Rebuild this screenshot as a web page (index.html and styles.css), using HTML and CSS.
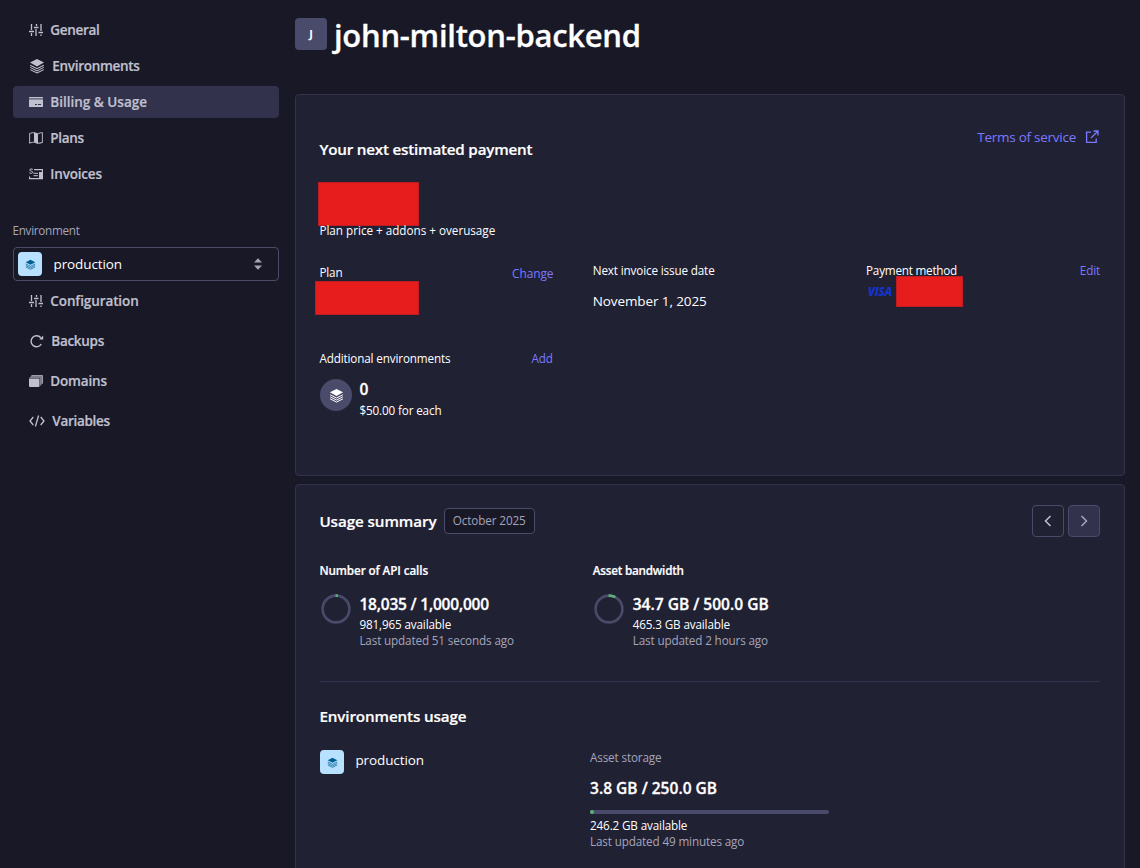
FILE: index.html
```
<!DOCTYPE html>
<html lang="en">
<head>
<meta charset="utf-8">
<title>john-milton-backend – Billing &amp; Usage</title>
<link rel="stylesheet" href="styles.css">
</head>
<body>
<svg class="sprite" aria-hidden="true">
  <symbol id="i-sliders" viewBox="0 0 14 14"><path d="M2.5 1v6M2.5 10v3M0 8.5h5M7.5 1v2M5 4.5h4.500M7 6v7M12 1v7M12 11.500v1.500M9.500 9.500h4.500" fill="none" stroke="currentColor" stroke-width="1.300"/></symbol>
  <symbol id="i-layers" viewBox="0 0 16 16"><path d="M8 1l7 3.600-7 3.800-7-3.800z" fill="currentColor"/><path d="M1.200 7.200L8 10.700l6.800-3.500M1.200 9.400L8 12.900l6.800-3.500M1.200 11.600L8 15l6.800-3.400" fill="none" stroke="currentColor" stroke-width="1.050"/></symbol>
  <symbol id="i-card" viewBox="0 0 14 12"><path fill="currentColor" fill-rule="evenodd" d="M.5 1h13a.5.5 0 01.5.5V2H0v-.5A.5.5 0 01.500 1zM0 3.500h14v7a.5.500 0 01-.5.500H.5a.500.500 0 01-.5-.500zM6 8v1h2V8zM9 8v1h3V8z"/><path d="M0 2h14v1.500H0z" fill="currentColor" opacity=".45"/></symbol>
  <symbol id="i-plans" viewBox="0 0 14 12"><path d="M5 0l4 1.500V12l-4-1.500z" fill="currentColor"/><path d="M5 .7H3L.6 1.600v9.500l2.600-.8H5M9 1.700l2.500-.9h1.900v9.500l-2.400.8H9" fill="none" stroke="currentColor" stroke-width="1.100" opacity=".85"/></symbol>
  <symbol id="i-invoice" viewBox="0 0 14 12"><path d="M5 1.600h8.500v9H.6V8.500" fill="none" stroke="currentColor" stroke-width="1.200"/><path d="M3.800 1.400C3 .7.600.800.600 2s3.200.9 3.200 2.300C3.800 5.600 1 5.600.300 4.700M4.500 5.300H9M4.500 7.700H9" fill="none" stroke="currentColor"/><path d="M10 4h4v7h-4z" fill="currentColor"/></symbol>
  <symbol id="i-refresh" viewBox="0 0 14 14"><path d="M11.300 3.700A5.500 5.500 0 1011.800 10" fill="none" stroke="currentColor" stroke-width="1.400"/><path d="M13.700 1.500v4H9.700z" fill="currentColor"/></symbol>
  <symbol id="i-domains" viewBox="0 0 14 12"><path d="M0 3.500h10.500V11a1 1 0 01-1 1H1a1 1 0 01-1-1z" fill="currentColor"/><path d="M.2 3L2.500.500h11v8L11 11V3z" fill="currentColor" opacity=".6"/><path d="M2.500.500h11v8" fill="none" stroke="currentColor" stroke-width=".7"/></symbol>
  <symbol id="i-code" viewBox="0 0 16 12"><path d="M4.300 2L1 6l3.300 4M11.700 2L15 6l-3.300 4M9.600.500L6.400 11.500" fill="none" stroke="currentColor" stroke-width="1.300"/></symbol>
</svg>

<div class="page">
  <aside class="sidebar">
    <nav class="nav">
      <a class="nav-item"><svg class="icon"><use href="#i-sliders"/></svg><span class="tight-4">General</span></a>
      <a class="nav-item"><svg class="icon icon-wide"><use href="#i-layers"/></svg><span class="tight-3">Environments</span></a>
      <a class="nav-item active"><svg class="icon icon-low"><use href="#i-card"/></svg><span>Billing &amp; Usage</span></a>
      <a class="nav-item"><svg class="icon icon-low"><use href="#i-plans"/></svg><span class="tight-3">Plans</span></a>
      <a class="nav-item"><svg class="icon icon-low"><use href="#i-invoice"/></svg><span class="tight-2">Invoices</span></a>
    </nav>
    <div class="env-label">Environment</div>
    <div class="env-select">
      <span class="env-badge"><svg><use href="#i-layers"/></svg></span>
      <span class="env-name">production</span>
      <svg class="carets" viewBox="0 0 8 12"><path d="M0 4.500L4 .300l4 4.200zM0 7.500l4 4.200 4-4.200z" fill="currentColor"/></svg>
    </div>
    <nav class="nav nav-env">
      <a class="nav-item"><svg class="icon"><use href="#i-sliders"/></svg><span class="tight-1">Configuration</span></a>
      <a class="nav-item"><svg class="icon icon-mid"><use href="#i-refresh"/></svg><span class="tight-3">Backups</span></a>
      <a class="nav-item"><svg class="icon icon-low"><use href="#i-domains"/></svg><span class="tight-2">Domains</span></a>
      <a class="nav-item"><svg class="icon icon-wide icon-low"><use href="#i-code"/></svg><span class="tight-3">Variables</span></a>
    </nav>
  </aside>

  <main class="main">
    <header class="project">
      <span class="avatar">J</span>
      <h1 class="project-name">john-milton-backend</h1>
    </header>

    <section class="card payment">
      <div class="payment-head">
        <h2 class="heading payment-title">Your next estimated payment</h2>
        <a class="link terms">Terms of service
          <svg class="external" viewBox="0 0 14 14"><path d="M6 2.200H1.600v10.200h9.600V8.500M8.500 1h4.500v4.500M13 1L6 8" fill="none" stroke="currentColor" stroke-width="1.300"/></svg>
        </a>
      </div>
      <div class="redacted redacted-price"></div>
      <p class="small price-note">Plan price + addons + overusage</p>

      <div class="columns">
        <div class="plan">
          <div class="label-row"><span class="small">Plan</span><a class="link change">Change</a></div>
          <div class="redacted redacted-plan"></div>
        </div>
        <div>
          <div class="small">Next invoice issue date</div>
          <div class="invoice-date">November 1, 2025</div>
        </div>
        <div>
          <div class="label-row"><span class="small payment-label">Payment method</span><a class="link small">Edit</a></div>
          <div class="payment-card"><span class="visa">VISA</span><span class="redacted redacted-card"></span></div>
        </div>
        <div class="extra">
          <div class="label-row"><span class="small">Additional environments</span><a class="link small add">Add</a></div>
          <div class="stat">
            <span class="round"><svg><use href="#i-layers"/></svg></span>
            <div><div class="figure zero">0</div><div class="small each">$50.00 for each</div></div>
          </div>
        </div>
      </div>
    </section>

    <section class="card usage">
      <div class="usage-head">
        <h2 class="heading">Usage summary</h2>
        <span class="month">October 2025</span>
        <button class="pager pager-first" aria-label="Previous"><svg viewBox="0 0 8 12"><path d="M6.500 1L1.500 6l5 5"/></svg></button>
        <button class="pager pager-next" aria-label="Next"><svg viewBox="0 0 8 12"><path d="M1.500 1l5 5-5 5"/></svg></button>
      </div>
      <div class="columns">
        <div>
          <h3 class="small metric-title">Number of API calls</h3>
          <div class="stat metric">
            <svg class="ring" viewBox="0 0 32 32"><circle cx="16" cy="16" r="13.400"/><circle class="ring-value" cx="16" cy="16" r="13.400" pathLength="100" stroke-dasharray="3 97" stroke-dashoffset=".6"/></svg>
            <div><div class="figure api-figure">18,035 / 1,000,000</div><div class="small">981,965 available</div><div class="small muted">Last updated 51 seconds ago</div></div>
          </div>
        </div>
        <div>
          <h3 class="small metric-title metric-asset">Asset bandwidth</h3>
          <div class="stat metric">
            <svg class="ring" viewBox="0 0 32 32"><circle cx="16" cy="16" r="13.400"/><circle class="ring-value" cx="16" cy="16" r="13.400" pathLength="100" stroke-dasharray="8.500 91.500" stroke-dashoffset=".6"/></svg>
            <div><div class="figure">34.7 GB / 500.0 GB</div><div class="small">465.3 GB available</div><div class="small muted">Last updated 2 hours ago</div></div>
          </div>
        </div>
      </div>
      <hr class="divider">
      <h2 class="heading">Environments usage</h2>
      <div class="env-usage">
        <div class="env-row"><span class="env-badge"><svg><use href="#i-layers"/></svg></span><span class="env-name">production</span></div>
        <div class="storage">
          <div class="small muted storage-label">Asset storage</div>
          <div class="figure storage-figure">3.8 GB / 250.0 GB</div>
          <div class="bar"><div class="bar-value" style="width:1.500%"></div></div>
          <div class="small">246.2 GB available</div>
          <div class="small muted">Last updated 49 minutes ago</div>
        </div>
      </div>
    </section>
  </main>
</div>
</body>
</html>
```

FILE: styles.css
```
* { box-sizing: border-box; }

body {
  margin: 0;
  height: 868px;
  overflow: hidden;
  background: #181826;
  color: #fff;
  font: 400 13.5px/20px "Open Sans", sans-serif;
}

h1, h2, h3, p { margin: 0; }
svg { display: block; flex: none; }
.sprite { position: absolute; width: 0; height: 0; }

.page { display: flex; gap: 16px; padding-left: 13px; height: 868px; }

/* Sidebar */
.sidebar { width: 266px; padding-top: 14px; color: #c0c0cf; flex: none; }
.nav { display: flex; flex-direction: column; gap: 4px; }
.nav-env { gap: 8px; margin-top: 4px; }
.nav-item {
  display: flex;
  align-items: center;
  gap: 7.3px;
  height: 32px;
  padding-left: 16px;
  border-radius: 4px;
  font-weight: 600;
  -webkit-text-stroke: 0.2px currentColor;
}
.nav-item.active { background: #32324d; }
.icon { width: 14px; height: 14px; }
.icon-mid { width: 15px; }
.icon-wide { width: 16px; height: 16px; }
.icon-low { height: 12px; }
.tight-1 { letter-spacing: -0.1px; }
.tight-2 { letter-spacing: -0.18px; }
.tight-3 { letter-spacing: -0.3px; }
.tight-4 { letter-spacing: -0.33px; }

.env-label {
  margin-top: 32px;
  color: #a5a5ba;
  font-size: 11.7px;
  line-height: 16px;
  letter-spacing: -0.28px;
  text-indent: -0.5px;
}
.env-select {
  display: flex;
  align-items: center;
  gap: 11.5px;
  height: 34px;
  margin-top: 9px;
  padding: 0 16px 0 4px;
  border: 1px solid #4a4a6a;
  border-radius: 4px;
  color: #fff;
}
.env-badge {
  display: grid;
  place-items: center;
  width: 24px;
  height: 24px;
  flex: none;
  border-radius: 4px;
  background: #b8e1ff;
  color: #006096;
}
.env-badge svg { width: 11px; height: 11px; }
.env-name { letter-spacing: -0.1px; }
.carets { width: 8px; height: 12px; margin-left: auto; color: #a5a5ba; }

/* Main column */
.main { width: 830px; padding-top: 18px; flex: none; }
.project { display: flex; gap: 7px; height: 68px; }
.avatar {
  display: grid;
  place-items: center;
  width: 32px;
  height: 32px;
  border-radius: 4px;
  background: #4a4a6a;
  font-size: 11px;
  line-height: 16px;
  font-weight: 700;
}
.project-name {
  font-size: 31px;
  line-height: 34px;
  font-weight: 600;
  letter-spacing: -0.27px;
  -webkit-text-stroke: 0.3px currentColor;
}

.card {
  margin-top: 8px;
  padding: 0 24px;
  border: 1px solid #32324d;
  border-radius: 4px;
  background: #212134;
  text-indent: -0.6px;
}
.heading {
  font-size: 15.2px;
  line-height: 24px;
  font-weight: 600;
  letter-spacing: -0.12px;
  -webkit-text-stroke: 0.2px currentColor;
}
.small { font-size: 11.7px; line-height: 16px; letter-spacing: -0.14px; }
.muted { color: #a5a5ba; }
.link { color: #7b79ff; }
.redacted { border: 1px solid #bd1c20; background: #e71d1d; }
.columns { display: grid; grid-template-columns: repeat(3, 1fr); column-gap: 40px; }
.label-row { display: flex; justify-content: space-between; }

.payment { height: 382px; padding-top: 32px; }
.payment-head { display: flex; justify-content: space-between; }
.payment-title { margin-top: 10px; letter-spacing: -0.2px; }
.terms { display: flex; align-items: center; gap: 9px; height: 20px; letter-spacing: -0.26px; }
.external { width: 14px; height: 14px; margin-right: 1px; }
.redacted-price { width: 101px; height: 44px; margin: 21px 0 0 -2px; }
.price-note { margin-top: -4px; letter-spacing: -0.01px; }
.payment .columns { grid-template-rows: 88px auto; margin-top: 24px; }
.plan { padding-top: 2px; }
.change { font-size: 11.9px; line-height: 18px; letter-spacing: -0.1px; }
.redacted-plan { width: 104px; height: 34px; margin: -1px 0 0 -5px; }
.invoice-date { margin-top: 13px; letter-spacing: -0.1px; }
.payment-label { letter-spacing: -0.22px; }
.payment-card { display: flex; margin-top: -2px; }
.visa {
  width: 29.300px;
  padding-left: 2px;
  color: #1434cb;
  font-size: 11.5px;
  line-height: 32px;
  font-weight: 800;
  font-style: italic;
  letter-spacing: -0.3px;
}
.redacted-card { width: 67px; height: 31px; }
.add { margin-right: 0.6px; }

.stat { display: flex; gap: 8px; }
.figure {
  font-size: 15.5px;
  line-height: 24px;
  font-weight: 600;
  letter-spacing: 0.02px;
  -webkit-text-stroke: 0.3px currentColor;
}
.extra .stat { margin-top: 11px; }
.zero { padding-top: 1px; line-height: 23px; }
.round {
  display: grid;
  place-items: center;
  width: 32px;
  height: 32px;
  margin-top: 2px;
  border-radius: 50%;
  background: #4a4a6a;
}
.round svg { width: 15px; height: 15px; }
.each { margin-top: 1px; }

.usage { height: 420px; padding-top: 20px; }
.usage-head { display: flex; align-items: center; height: 32px; margin-bottom: 25px; }
.usage-head .heading { width: 116px; white-space: nowrap; letter-spacing: -0.08px; }
.month {
  width: 91px;
  height: 26px;
  margin-left: 8px;
  border: 1px solid #4a4a6a;
  border-radius: 4px;
  background: #181826;
  color: #a5a5ba;
  font-size: 11.7px;
  line-height: 23px;
  letter-spacing: -0.1px;
  text-align: center;
}
.pager {
  display: grid;
  place-items: center;
  width: 32px;
  height: 32px;
  padding: 0;
  border: 1px solid #4a4a6a;
  border-radius: 4px;
  background: #212134;
  color: #c0c0cf;
}
.pager svg { width: 8px; height: 12px; fill: none; stroke: currentColor; stroke-width: 1.5; }
.pager-first { margin-left: auto; }
.pager-next { margin-left: 4px; background: #32324d; color: #a5a5ba; }

.metric-title { font-weight: 600; letter-spacing: -0.1px; -webkit-text-stroke: 0.2px currentColor; }
.metric-asset { letter-spacing: -0.22px; }
.metric { margin-top: 14px; }
.ring { width: 32px; height: 32px; margin-top: 1px; transform: rotate(-90deg); fill: none; stroke: #4a4a6a; stroke-width: 2.6; }
.ring-value { stroke: #5cb176; }
.api-figure { letter-spacing: -0.2px; }

.divider { height: 1px; margin: 33px 0 22px; border: 0; background: #32324d; }
.env-usage { display: grid; grid-template-columns: 270px 239px; margin-top: 22px; }
.env-row { display: flex; gap: 12px; }
.storage { text-indent: 0; }
.storage-label { line-height: 15px; }
.storage-figure { margin-top: 11px; }
.bar { height: 4px; margin: 10px 0 3px; border-radius: 2px; background: #4a4a6a; }
.bar-value { height: 4px; min-width: 4px; border-radius: 2px; background: #5cb176; }
```
